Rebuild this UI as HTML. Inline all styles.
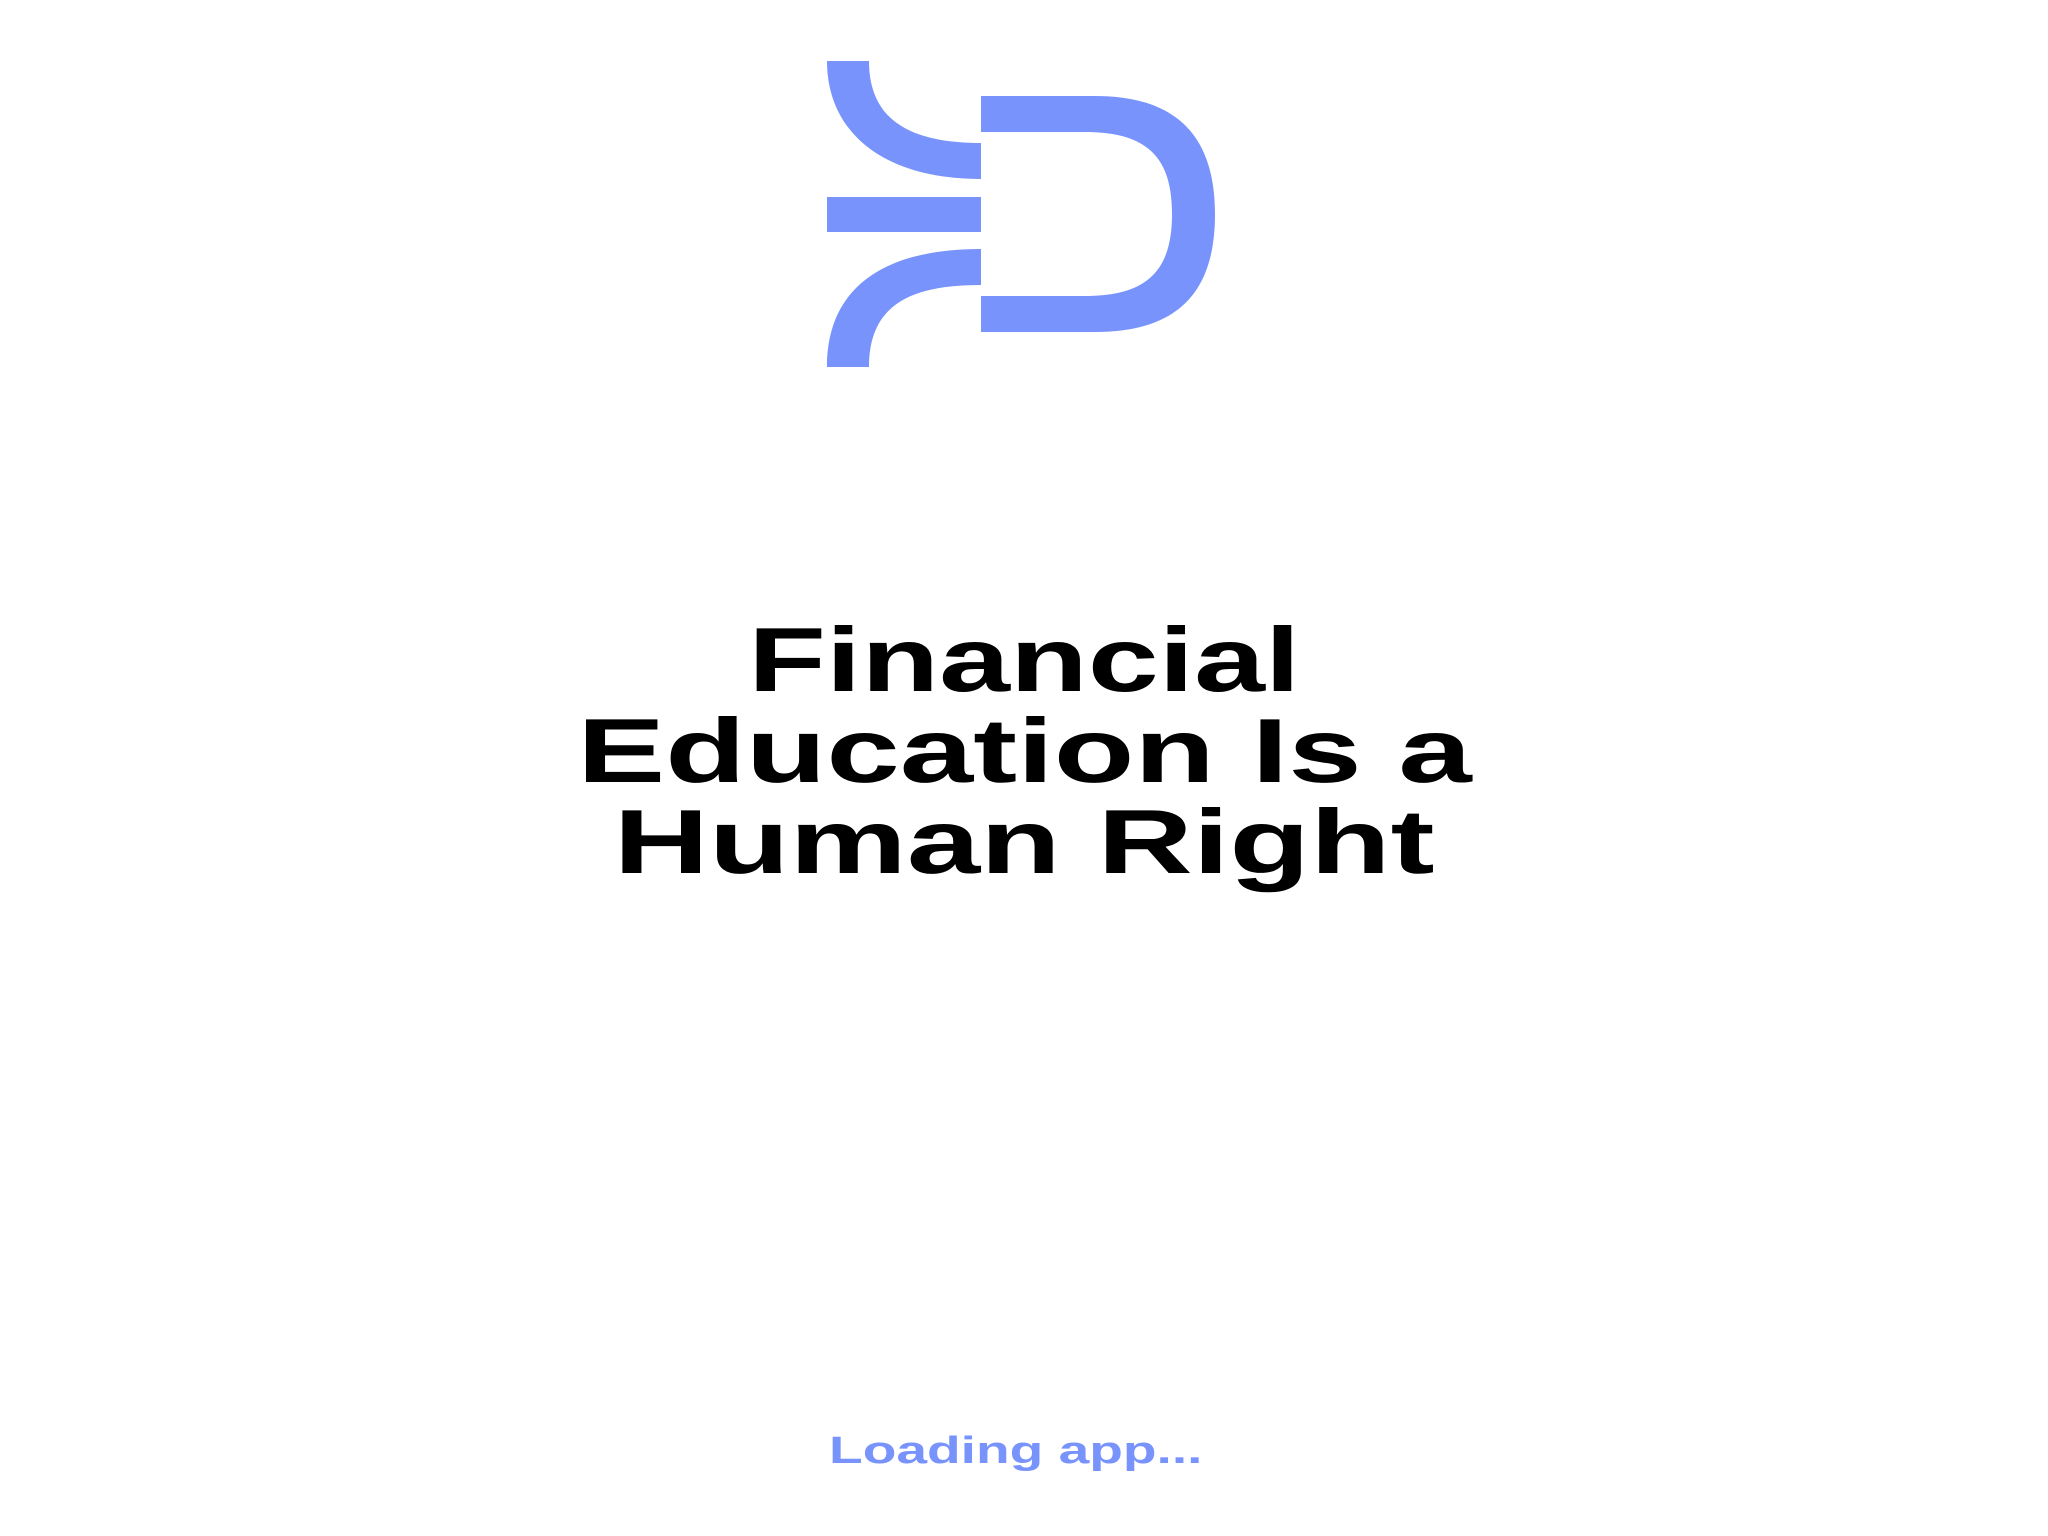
<!DOCTYPE html>
<html><head><meta charset="utf-8">
<style>
html,body{margin:0;padding:0;background:#fff;width:2048px;height:1536px;overflow:hidden;}
.line{position:absolute;left:0;width:2048px;text-align:center;font-family:"Liberation Sans",sans-serif;font-weight:bold;color:#000;white-space:nowrap;}
.line span{display:inline-block;transform-origin:center;}
.h{font-size:91px;line-height:91px;}
.ld{color:#7893fc;font-size:38px;line-height:38px;}
</style></head><body>
<svg width="2048" height="400" style="position:absolute;left:0;top:0" viewBox="0 0 2048 400">
<g fill="#7893fc">
<path d="M827 61 H869 C869 120 910 143 981 143 V179 C880 179 827 130 827 61Z"/>
<rect x="827" y="197" width="154" height="35"/>
<path d="M981 249 V285 C910 285 869 305 869 367 H827 C827 290 880 249 981 249Z"/>
<path d="M981 96 H1095 C1185 96 1215 145 1215 214 C1215 285 1185 332 1095 332 H981 V296 H1085 C1150 296 1172 268 1172 214 C1172 160 1150 132 1085 132 H981Z"/>
</g></svg>
<div class="line h" style="top:615px"><span style="transform:scaleX(1.40)">Financial</span></div>
<div class="line h" style="top:706px"><span style="transform:scaleX(1.45)">Education Is a</span></div>
<div class="line h" style="top:797px"><span style="transform:scaleX(1.45)">Human Right</span></div>
<div class="line ld" style="top:1432px;left:-8px"><span style="transform:scaleX(1.45)">Loading app...</span></div>
</body></html>
